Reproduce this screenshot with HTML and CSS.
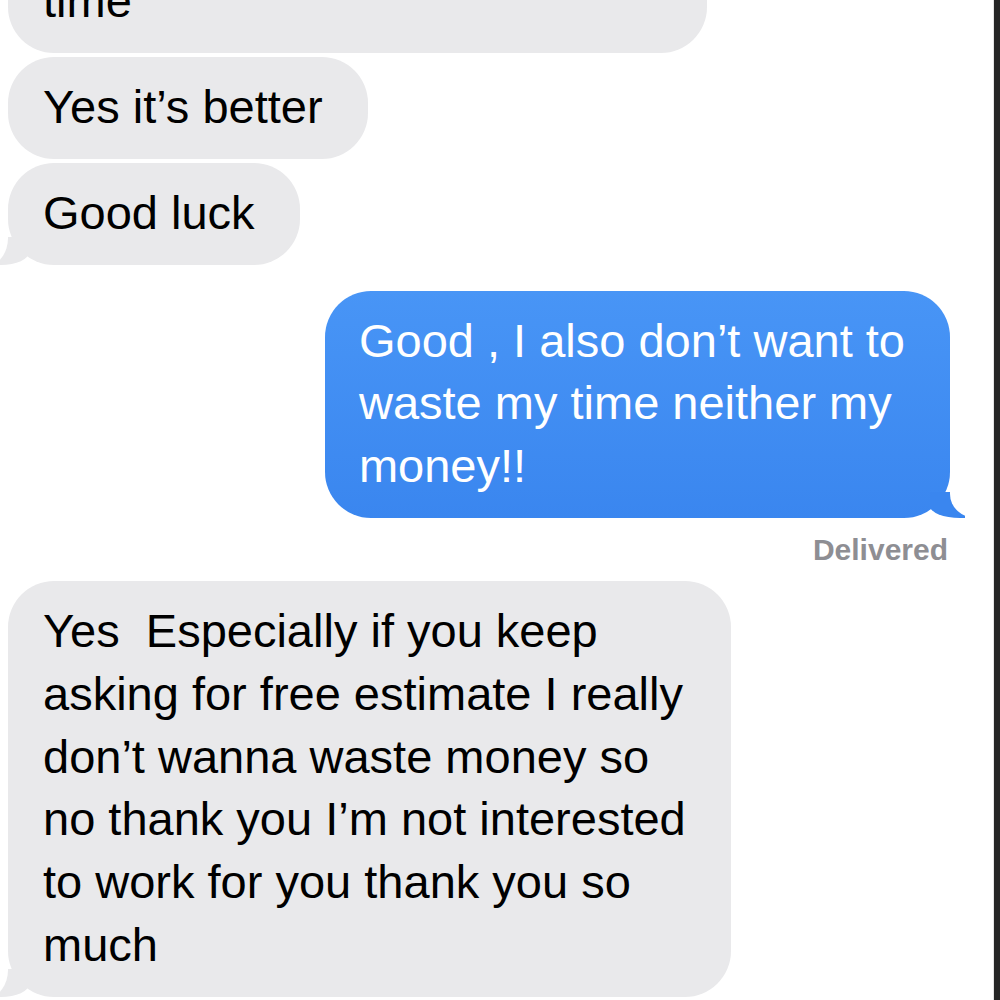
FILE: index.html
```html
<!DOCTYPE html>
<html lang="en">
<head>
    <meta charset="UTF-8">
    <meta name="viewport" content="width=device-width, initial-scale=1.0">
    <title>Messages</title>
    <link rel="stylesheet" href="styles.css">
</head>
<body>

    <div class="screen">
        <div class="thread">
            <div class="group them">
                <p class="bubble">I don’t want anybody to waste<br>time</p>
                <p class="bubble">Yes it’s better</p>
                <p class="bubble tail">Good luck</p>
            </div>

            <div class="group me">
                <p class="bubble tail">Good , I also don’t want to<br>waste my time neither my<br>money!!</p>
                <p class="status">Delivered</p>
            </div>

            <div class="group them">
                <p class="bubble tail">Yes&nbsp; Especially if you keep<br>asking for free estimate I really<br>don’t wanna waste money so<br>no thank you I’m not interested<br>to work for you thank you so<br>much</p>
            </div>
        </div>
    </div>

</body>
</html>
```

FILE: styles.css
```css
body {
    margin: 0;
    font-family: "Liberation Sans", Arial, sans-serif;
    background-color: #fff;
}
.screen {
    min-height: 100vh;
    border-right: 6px solid #262626;
    box-shadow: inset -1px 0 #e4e4e4;
    overflow: hidden;
}
/* thread is scrolled: the first bubble starts above the top edge */
.thread {
    margin-top: -111.6px;
    padding: 0 44px 0 8px;
    display: flex;
    flex-direction: column;
}
.group {
    display: flex;
    flex-direction: column;
    gap: 4px;
}
.them {
    align-items: flex-start;
}
.me {
    align-items: flex-end;
    margin-top: 26px;
}
.me + .them {
    margin-top: 13.4px;
}
.bubble {
    position: relative;
    margin: 0;
    box-sizing: border-box;
    padding: 19px 45px 20px 35px;
    border-radius: 46px;
    font-size: 47px;
    line-height: 62.8px;
    white-space: nowrap;
    background-color: #e9e9eb;
    color: #000;
}
.me .bubble {
    padding-left: 34px;
    background: linear-gradient(#4895f6, #3a86ef);
    color: #fff;
}
.status {
    margin: 9.6px 2px 0 0;
    font-size: 30px;
    line-height: 36px;
    font-weight: bold;
    color: #8e8e93;
}

/* bubble tails */
.tail::before, .tail::after {
    content: "";
    position: absolute;
    bottom: 0;
}
.them .tail::before {
    left: -9px;
    width: 30px;
    height: 28px;
    background-color: #e9e9eb;
    border-bottom-right-radius: 28px 13px;
}
.them .tail::after {
    left: -30px;
    width: 30px;
    height: 28px;
    background-color: #fff;
    border-bottom-right-radius: 20px 27px;
}
.me .tail::before {
    right: -15px;
    width: 35px;
    height: 26px;
    background-color: #3a86ef;
    border-bottom-left-radius: 30px 12px;
}
.me .tail::after {
    right: -34px;
    width: 34px;
    height: 26px;
    background-color: #fff;
    border-bottom-left-radius: 26px 24px;
}
```
